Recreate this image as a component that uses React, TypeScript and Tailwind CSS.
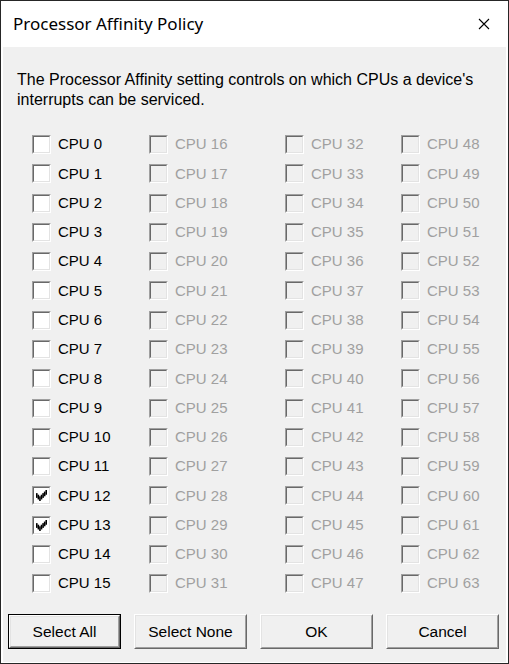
import React from 'react'

const font = { fontFamily: '"Liberation Sans", Arial, sans-serif' }

// classic 7x7 check pattern, one 3px-tall run per column
const checkRuns = [2, 3, 4, 3, 2, 1, 0]

function Checkbox({ checked, disabled }: { checked?: boolean; disabled?: boolean }) {
  return (
    <div className="w-[19px] h-[19px] border border-t-[#a0a0a0] border-l-[#a0a0a0] border-b-white border-r-white shrink-0">
      <div
        className={`w-full h-full border border-t-[#696969] border-l-[#696969] border-b-[#e3e3e3] border-r-[#e3e3e3] flex items-center justify-center ${
          disabled ? 'bg-[#f0f0f0]' : 'bg-white'
        }`}
      >
        {checked && (
          <svg width="11" height="11" viewBox="0 0 7 7">
            {checkRuns.map((y, x) => (
              <rect key={x} x={x} y={y} width="1.02" height="3" fill="#000" />
            ))}
          </svg>
        )}
      </div>
    </div>
  )
}

function Button({ label, isDefault }: { label: string; isDefault?: boolean }) {
  return (
    <div className={`w-[113px] h-[35px] ${isDefault ? 'border border-black' : ''}`}>
      <div className="w-full h-full border border-t-white border-l-white border-b-[#696969] border-r-[#696969]">
        <div className="w-full h-full border border-t-[#e3e3e3] border-l-[#e3e3e3] border-b-[#a0a0a0] border-r-[#a0a0a0] bg-[#f0f0f0] flex items-center justify-center text-[15.5px] text-black">
          {label}
        </div>
      </div>
    </div>
  )
}

const checkedCpus = [12, 13]

export default function App() {
  const rows = Array.from({ length: 16 }, (_, i) => i)
  const cols = [0, 16, 32, 48]

  return (
    <div className="w-[509px] h-[664px] border border-[#262626] bg-white flex flex-col" style={font}>
      <div className="h-[46px] flex items-center justify-between shrink-0">
        <span className="pl-[12px] text-[17px] text-black" style={{ fontFamily: '"Noto Sans", "Open Sans", sans-serif' }}>
          Processor Affinity Policy
        </span>
        <svg width="12" height="12" viewBox="0 0 12 12" className="mr-[18px]">
          <path d="M1 1 L11 11 M11 1 L1 11" stroke="#000" strokeWidth="1.1" />
        </svg>
      </div>
      <div className="flex-1 mx-[2px] mb-[1px] bg-[#f0f0f0] flex flex-col">
        <p className="pt-[23px] pl-[14px] text-[16px] leading-[20px] text-black">
          The Processor Affinity setting controls on which CPUs a device's
          <br />
          interrupts can be serviced.
        </p>
        <div className="mt-[20px] pl-[29px] grid grid-cols-[117px_136px_116px_auto]">
          {rows.map((r) =>
            cols.map((c) => {
              const n = r + c
              const disabled = c !== 0
              return (
                <div key={n} className="h-[29.27px] flex items-center gap-[7px]">
                  <Checkbox checked={checkedCpus.includes(n)} disabled={disabled} />
                  <span className={`text-[15px] ${disabled ? 'text-[#a0a0a0]' : 'text-black'}`}>CPU {n}</span>
                </div>
              )
            })
          )}
        </div>
        <div className="mt-[16px] pl-[5px] flex gap-[13px]">
          <Button label="Select All" isDefault />
          <Button label="Select None" />
          <Button label="OK" />
          <Button label="Cancel" />
        </div>
      </div>
    </div>
  )
}
